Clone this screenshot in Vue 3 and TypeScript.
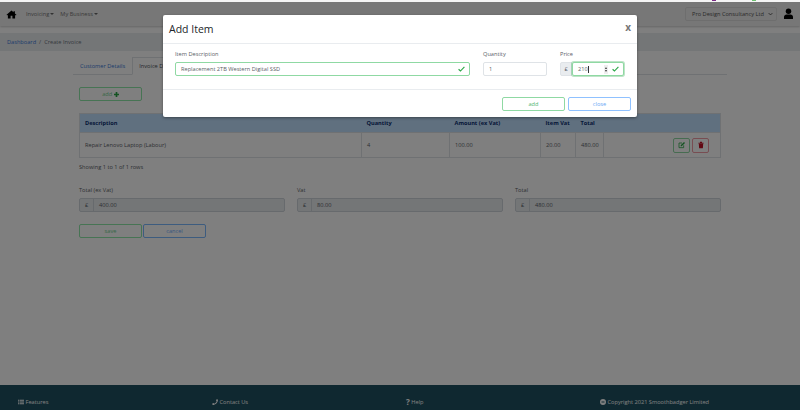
<script setup lang="ts">
interface LineItem {
  description: string
  quantity: number
  amount: string
  vat: string
  total: string
}

const items: LineItem[] = [
  { description: 'Repair Lenovo Laptop (Labour)', quantity: 4, amount: '100.00', vat: '20.00', total: '480.00' }
]

const totals = [
  { label: 'Total (ex Vat)', value: '400.00' },
  { label: 'Vat', value: '80.00' },
  { label: 'Total', value: '480.00' }
]
</script>

<template>
  <div class="page">
    <div class="top-strip">
      <span class="tick purple"></span>
      <span class="tick green"></span>
    </div>
    <nav class="navbar">
      <svg class="home" viewBox="0 0 24 20" aria-hidden="true">
        <path d="M12 1 1 10.5l1.3 1.5L4 10.600V19h6v-6h4v6h6v-8.400l1.700 1.400L23 10.500 19.500 7.500V2.500h-3v2.400z" />
      </svg>
      <a class="nav-link">Invoicing<i class="caret"></i></a>
      <a class="nav-link">My Business<i class="caret"></i></a>
      <div class="nav-right">
        <div class="company">
          <span>Pro Design Consultancy Ltd</span>
          <svg viewBox="0 0 8 6" class="chev" aria-hidden="true"><path d="M1 1.500 4 4.500 7 1.500" /></svg>
        </div>
        <svg class="user" viewBox="0 0 20 24" aria-hidden="true">
          <circle cx="10" cy="6.500" r="5.500" />
          <path d="M1 22v-4c0-3 2.500-5 5-5h8c2.500 0 5 2 5 5v4z" />
        </svg>
      </div>
    </nav>

    <div class="breadcrumb">
      <a>Dashboard</a>
      <span class="sep">/</span>
      <span>Create Invoice</span>
    </div>

    <main class="content">
      <div class="tabs">
        <a class="tab">Customer Details</a>
        <a class="tab active">Invoice Details</a>
      </div>

      <button class="btn btn-green btn-add">
        add
        <svg class="plus" viewBox="0 0 6 6" aria-hidden="true"><path d="M2 0h2v2h2v2H4v2H2V4H0V2h2z" /></svg>
      </button>

      <table class="grid">
        <thead>
          <tr>
            <th class="c-desc">Description</th>
            <th class="c-qty">Quantity</th>
            <th class="c-amount">Amount (ex Vat)</th>
            <th class="c-vat">Item Vat</th>
            <th class="c-total">Total</th>
            <th></th>
          </tr>
        </thead>
        <tbody>
          <tr v-for="item in items" :key="item.description">
            <td>{{ item.description }}</td>
            <td>{{ item.quantity }}</td>
            <td>{{ item.amount }}</td>
            <td>{{ item.vat }}</td>
            <td>{{ item.total }}</td>
            <td class="actions">
              <button class="icon-btn edit">
                <svg viewBox="0 0 12 12" aria-hidden="true">
                  <path class="outline" d="M8.500 6.500V10H1.500V3H6" />
                  <path class="solid" d="M4 6.500 9 1.500 10.500 3 5.500 8H4z" />
                </svg>
              </button>
              <button class="icon-btn remove">
                <svg viewBox="0 0 12 12" aria-hidden="true">
                  <path d="M2 2.500h8v1.200H2zM4.500 1.300h3v1.500h-3zM2.700 4.300h6.600L8.800 11H3.200z" />
                </svg>
              </button>
            </td>
          </tr>
        </tbody>
      </table>

      <p class="rows">Showing 1 to 1 of 1 rows</p>

      <div class="totals">
        <div v-for="t in totals" :key="t.label" class="total-field">
          <label>{{ t.label }}</label>
          <div class="readonly">
            <span class="prefix">£</span>
            <span class="value">{{ t.value }}</span>
          </div>
        </div>
      </div>

      <div class="form-actions">
        <button class="btn btn-save">save</button>
        <button class="btn btn-cancel">cancel</button>
      </div>
    </main>

    <footer class="footer">
      <span class="f-item">
        <svg viewBox="0 0 12 12" aria-hidden="true"><path d="M0 1.500h2v2H0zM3 1.500h9v2H3zM0 5h2v2H0zM3 5h9v2H3zM0 8.500h2v2H0zM3 8.500h9v2H3z" /></svg>
        Features
      </span>
      <span class="f-item">
        <svg viewBox="0 0 12 12" aria-hidden="true"><path d="M12 1.500 9.500 0 8 3.500l1.300 1C8.500 6.500 6.500 8.500 4.500 9.300l-1-1.300L0 9.500 1.500 12C7 12 12 7 12 1.500z" /></svg>
        Contact Us
      </span>
      <span class="f-item"><b class="q">?</b> Help</span>
      <span class="f-item">
        <svg viewBox="0 0 12 12" aria-hidden="true"><path fill-rule="evenodd" d="M6 0a6 6 0 1 0 0 12A6 6 0 0 0 6 0zM3 5h6v2H3z" /></svg>
        Copyright 2021 Smoothbadger Limited
      </span>
    </footer>

    <div class="backdrop"></div>

    <div class="modal">
      <header class="modal-head">
        <h5>Add Item</h5>
        <span class="close">x</span>
      </header>
      <div class="modal-body">
        <div class="field f-desc">
          <label>Item Description</label>
          <div class="input valid">
            <span>Replacement 2TB Western Digital SSD</span>
            <svg class="check" viewBox="0 0 12 10" aria-hidden="true"><path d="M1 5.500 4.200 8.500 11 1.500" /></svg>
          </div>
        </div>
        <div class="field f-qty">
          <label>Quantity</label>
          <div class="input plain"><span>1</span></div>
        </div>
        <div class="field f-price">
          <label>Price</label>
          <div class="price-row">
            <span class="price-prefix">£</span>
            <div class="input valid focused">
              <span class="typed">210</span>
              <span class="spin"><i class="up"></i><i class="down"></i></span>
              <svg class="check" viewBox="0 0 12 10" aria-hidden="true"><path d="M1 5.500 4.200 8.500 11 1.500" /></svg>
            </div>
          </div>
        </div>
      </div>
      <footer class="modal-foot">
        <button class="btn btn-green">add</button>
        <button class="btn btn-blue">close</button>
      </footer>
    </div>
  </div>
</template>

<style>
html, body {
  margin: 0;
  background: #fff;
}
</style>

<style scoped>
.page {
  position: relative;
  width: 800px;
  height: 410px;
  overflow: hidden;
  display: flex;
  flex-direction: column;
  background: #fff;
  font-family: "Open Sans", "Noto Sans", sans-serif;
  font-size: 5.65px;
  color: #5a6066;
}

.top-strip {
  height: 2px;
  position: relative;
  z-index: 3;
  background: #f4f4f4;
  flex-shrink: 0;
}

.tick {
  position: absolute;
  top: 0;
  height: 1px;
  width: 4px;
}
.tick.purple { left: 712px; background: #7a2a86; }
.tick.green { left: 752px; background: #6cc070; }

.navbar {
  height: 24px;
  display: flex;
  align-items: center;
  padding-left: 6px;
  background: #eee;
  box-shadow: 0 1px 2px rgba(0, 0, 0, 0.2);
  flex-shrink: 0;
}

.home {
  width: 11px;
  height: 9px;
  fill: #000;
  margin-right: 9px;
}

.nav-link {
  color: #777;
  margin-right: 6px;
}

.caret {
  display: inline-block;
  border-top: 2px solid #666;
  border-left: 2px solid transparent;
  border-right: 2px solid transparent;
  margin-left: 1px;
  vertical-align: 1px;
}

.nav-right {
  margin-left: auto;
  display: flex;
  align-items: center;
}

.company {
  width: 92px;
  height: 14px;
  box-sizing: border-box;
  border: 1px solid #ddd;
  border-radius: 2px;
  display: flex;
  align-items: center;
  justify-content: space-between;
  padding: 0 3px 0 6px;
  color: #555;
}

.chev {
  width: 5px;
  height: 4px;
  fill: none;
  stroke: #333;
  stroke-width: 1.2;
}

.user {
  width: 11px;
  height: 12px;
  margin: 0 6px;
  fill: #000;
}

.breadcrumb {
  margin-top: 7px;
  height: 18px;
  display: flex;
  align-items: center;
  padding-left: 7px;
  background: #e9ecef;
  color: #6c757d;
  flex-shrink: 0;
}

.breadcrumb a {
  color: #3a7ad8;
}

.sep {
  margin: 0 3px;
}

.content {
  flex: 1;
  padding: 6px 79px 0;
  min-height: 0;
}

.tabs {
  display: flex;
  margin: 0 -6px;
  height: 17px;
  border-bottom: 1px solid #dee2e6;
}

.tab {
  padding: 0 6px;
  display: flex;
  align-items: center;
  color: #3a7ad8;
  border: 1px solid transparent;
}

.tab.active {
  color: #495057;
  border-color: #dee2e6 #dee2e6 #fff;
  margin-bottom: -1px;
}

.btn {
  box-sizing: border-box;
  height: 14px;
  width: 63px;
  border-radius: 2px;
  background: transparent;
  font: inherit;
  padding: 0;
}

.btn-green {
  border: 1px solid #8fd9a3;
  color: #55b573;
}

.btn-blue {
  border: 1px solid #8fc1ff;
  color: #6aa8f5;
}

.btn-save {
  border: 1px solid #8fe8a8;
  color: #70d090;
}

.btn-cancel {
  border: 1px solid #7ab8ff;
  color: #6fb0ff;
}

.btn-add {
  display: block;
  margin-top: 12px;
  border-color: #8fe8a8;
  color: #70d090;
}

.plus {
  width: 5px;
  height: 5px;
  fill: #28a745;
  vertical-align: -0.5px;
}

.grid {
  margin-top: 12px;
  width: 642px;
  border-collapse: collapse;
  table-layout: fixed;
  border: 1px solid #dee2e6;
}

.grid th {
  box-sizing: border-box;
  height: 19px;
  padding: 0 5px;
  text-align: left;
  background: #c0e0ff;
  color: #0b2e6f;
  font-weight: 700;
  white-space: nowrap;
}

.grid td {
  height: 24px;
  padding: 0 5px;
  border: 1px solid #dee2e6;
}

.c-desc { width: 282px; }
.c-qty { width: 88px; }
.c-amount { width: 91px; }
.c-vat { width: 35px; }
.c-total { width: 28px; }

.grid td.actions {
  text-align: right;
  padding-right: 11px;
  white-space: nowrap;
}

.icon-btn {
  box-sizing: border-box;
  width: 17px;
  height: 15px;
  padding: 0;
  margin-left: 2px;
  border-radius: 2px;
  background: transparent;
  vertical-align: middle;
  display: inline-flex;
  align-items: center;
  justify-content: center;
}

.icon-btn svg {
  width: 8px;
  height: 8px;
}

.icon-btn.edit {
  border: 1px solid #8fd9a3;
}

.edit .outline {
  fill: none;
  stroke: #28a745;
  stroke-width: 1.2;
}

.edit .solid {
  fill: #28a745;
}

.icon-btn.remove {
  border: 1px solid #f09aa5;
}

.remove svg {
  fill: #c40f25;
}

.rows {
  margin: 3px 0 0;
  line-height: 12px;
}

.totals {
  display: grid;
  grid-template-columns: repeat(3, 206px);
  column-gap: 12px;
  margin-top: 12px;
}

.total-field label {
  display: block;
  line-height: 10px;
  margin-bottom: 3px;
}

.readonly {
  display: flex;
  height: 14px;
  box-sizing: border-box;
  border: 1px solid #ced4da;
  border-radius: 2px;
  background: #e9ecef;
  align-items: stretch;
}

.prefix {
  width: 13px;
  display: flex;
  align-items: center;
  justify-content: center;
  border-right: 1px solid #ced4da;
}

.value {
  padding-left: 5px;
  line-height: 12px;
}

.form-actions {
  display: flex;
  gap: 1px;
  margin-top: 12px;
}

.footer {
  position: relative;
  height: 25px;
  background: #1e5060;
  color: #fff;
  flex-shrink: 0;
  display: grid;
  grid-template-columns: repeat(3, 194px) 1fr;
  align-items: center;
  padding: 8px 0 0 18px;
  box-sizing: border-box;
}

.f-item {
  display: flex;
  align-items: center;
  gap: 1.5px;
}

.f-item svg {
  width: 6px;
  height: 6px;
  fill: #fff;
}

.q {
  font-size: 8px;
  line-height: 8px;
}

.backdrop {
  position: absolute;
  inset: 0;
  background: rgba(0, 0, 0, 0.5);
  z-index: 1;
}

.modal {
  position: absolute;
  left: 163px;
  top: 15px;
  width: 474px;
  height: 102px;
  background: #fff;
  border-radius: 2px;
  z-index: 2;
  display: flex;
  flex-direction: column;
  box-shadow: 0 1px 3px rgba(0, 0, 0, 0.4);
}

.modal-head {
  height: 29px;
  box-sizing: border-box;
  border-bottom: 1px solid #e9ecef;
  display: flex;
  align-items: center;
  justify-content: space-between;
  padding: 0 6px;
  flex-shrink: 0;
}

.modal-head h5 {
  margin: 0;
  font-size: 10.5px;
  font-weight: 400;
  color: #212529;
}

.close {
  font-size: 10px;
  font-weight: 700;
  color: #777;
  margin-bottom: 4px;
}

.modal-body {
  height: 45px;
  box-sizing: border-box;
  display: flex;
  padding: 5px 12px 0;
  flex-shrink: 0;
}

.field label {
  display: block;
  line-height: 10px;
  margin-bottom: 3px;
}

.f-desc { width: 295px; margin-right: 13px; }
.f-qty { width: 64px; }
.f-price { width: 64px; margin-left: 13px; }

.input {
  box-sizing: border-box;
  height: 14px;
  display: flex;
  align-items: center;
  border: 1px solid #dfe3e7;
  border-radius: 2px;
  padding: 0 4px 0 5px;
  background: #fff;
}

.input.valid {
  border-color: #8fd9a3;
}

.input.focused {
  box-shadow: 0 0 0 1px rgba(40, 167, 69, 0.3);
  flex: 1;
}

.check {
  width: 7px;
  height: 6px;
  margin-left: auto;
  fill: none;
  stroke: #28a745;
  stroke-width: 2;
  flex-shrink: 0;
}

.price-row {
  display: flex;
}

.price-prefix {
  width: 12px;
  height: 14px;
  display: flex;
  align-items: center;
  justify-content: center;
  background: #e9ecef;
  border: 1px solid #dfe3e7;
  box-sizing: border-box;
  border-radius: 2px 0 0 2px;
}

.typed {
  border-right: 1px solid #333;
  line-height: 7px;
}

.spin {
  margin-left: auto;
  width: 4px;
  height: 9px;
  background: #eee;
  display: flex;
  flex-direction: column;
  justify-content: center;
  align-items: center;
  gap: 1px;
}

.spin i {
  width: 0;
  height: 0;
  border-left: 1.500px solid transparent;
  border-right: 1.500px solid transparent;
}

.spin .up { border-bottom: 2px solid #333; }
.spin .down { border-top: 2px solid #333; }

.input.focused .check {
  margin-left: 4px;
}

.modal-foot {
  flex: 1;
  border-top: 1px solid #e9ecef;
  display: flex;
  justify-content: flex-end;
  align-items: center;
  gap: 3px;
  padding-right: 6px;
}
</style>
